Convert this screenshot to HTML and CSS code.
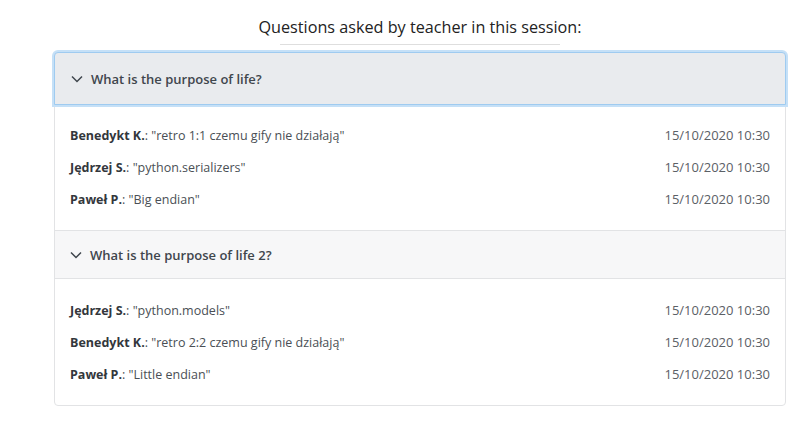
FILE: index.html
```html
<!DOCTYPE html>
<html lang="en">

<head>
    <meta charset="UTF-8" />
    <title>Questions</title>
    <link rel="stylesheet" href="styles.css">
</head>

<body>
    <div class="page">
        <div class="title">
            <h1>Questions asked by teacher in this session:</h1>
            <div class="title-line"></div>
        </div>

        <div class="accordion">
            <div class="item">
                <div class="item-header focused">
                    <svg class="chevron" width="12" height="8" viewBox="0 0 12 8"><polyline points="1,1.5 6,6.5 11,1.5" /></svg>
                    <span>What is the purpose of life?</span>
                </div>
                <div class="item-body">
                    <div class="answer">
                        <div><b>Benedykt K.</b>: "retro 1:1 czemu gify nie działają"</div>
                        <div class="date">15/10/2020 10:30</div>
                    </div>
                    <div class="answer">
                        <div><b>Jędrzej S.</b>: "python.serializers"</div>
                        <div class="date">15/10/2020 10:30</div>
                    </div>
                    <div class="answer">
                        <div><b>Paweł P.</b>: "Big endian"</div>
                        <div class="date">15/10/2020 10:30</div>
                    </div>
                </div>
            </div>
            <div class="item">
                <div class="item-header">
                    <svg class="chevron" width="12" height="8" viewBox="0 0 12 8"><polyline points="1,1.5 6,6.5 11,1.5" /></svg>
                    <span>What is the purpose of life 2?</span>
                </div>
                <div class="item-body">
                    <div class="answer">
                        <div><b>Jędrzej S.</b>: "python.models"</div>
                        <div class="date">15/10/2020 10:30</div>
                    </div>
                    <div class="answer">
                        <div><b>Benedykt K.</b>: "retro 2:2 czemu gify nie działają"</div>
                        <div class="date">15/10/2020 10:30</div>
                    </div>
                    <div class="answer">
                        <div><b>Paweł P.</b>: "Little endian"</div>
                        <div class="date">15/10/2020 10:30</div>
                    </div>
                </div>
            </div>
        </div>
    </div>
</body>

</html>
```

FILE: styles.css
```css
* {
    box-sizing: border-box;
}

body {
    margin: 0;
    font-family: 'Open Sans', 'Noto Sans', sans-serif;
    background-color: #fff;
    color: #212529;
}

.page {
    width: 732px;
    margin-left: 54px;
}

.title {
    padding-top: 16px;
    height: 52px;
}

.title h1 {
    margin: 0;
    font-size: 16.2px;
    font-weight: 400;
    line-height: 22px;
    text-align: center;
    color: #222;
}

.title-line {
    width: 280px;
    margin: 6px auto 0;
    border-top: 1px solid #dedede;
}

.accordion {
    border: 1px solid #e2e3e5;
    border-radius: 4px;
}

.item-header {
    display: flex;
    align-items: center;
    gap: 8px;
    height: 49px;
    padding: 0 15px;
    background-color: #f7f7f8;
    border-bottom: 1px solid #e2e3e5;
    font-size: 13px;
    font-weight: 600;
    color: #3f464d;
}

.item + .item .item-header {
    border-top: 1px solid #e2e3e5;
}

.item-header.focused {
    position: relative;
    z-index: 1;
    height: 53px;
    margin: -1px;
    padding-left: 16px;
    background-color: #e9ebee;
    border: 1px solid #9fcbf0;
    border-radius: 4px 4px 0 0;
    box-shadow: 0 0 0 2px #c5e0f7;
}

.chevron polyline {
    fill: none;
    stroke: #3f464d;
    stroke-width: 1.5;
}

.item-body {
    padding: 15px;
}

.answer {
    display: flex;
    justify-content: space-between;
    align-items: center;
    height: 32px;
    font-size: 12.5px;
    color: #4a4f55;
}

.answer b {
    font-weight: 700;
    color: #33373c;
}

.date {
    font-size: 13px;
    color: #5b6066;
}
```
